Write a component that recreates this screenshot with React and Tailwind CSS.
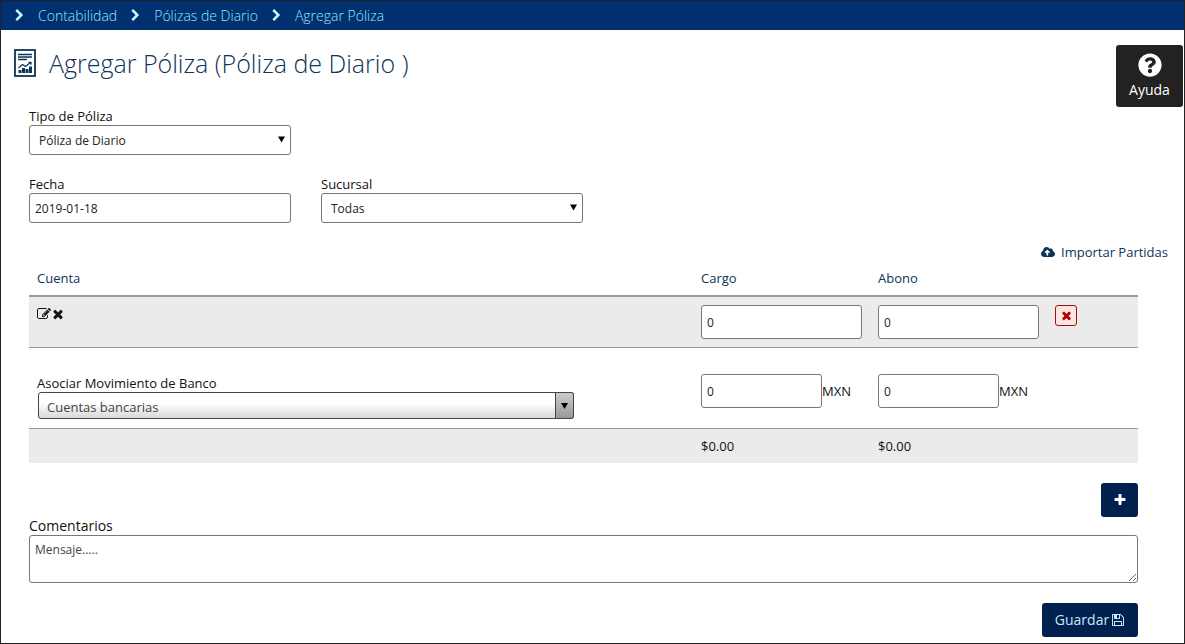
import { useState } from "react";
import { FaCloudUploadAlt, FaQuestionCircle } from "react-icons/fa";

const ICON_PATHS = {
  chevron:
    "M1363 877l-742 742q-19 19-45 19t-45-19l-166-166q-19-19-19-45t19-45l531-531-531-531q-19-19-19-45t19-45l166-166q19-19 45-19t45 19l742 742q19 19 19 45t-19 45z",
  times:
    "M1490 1322q0 40-28 68l-136 136q-28 28-68 28t-68-28l-294-294-294 294q-28 28-68 28t-68-28l-136-136q-28-28-28-68t28-68l294-294-294-294q-28-28-28-68t28-68l136-136q28-28 68-28t68 28l294 294 294-294q28-28 68-28t68 28l136 136q28 28 28 68t-28 68l-294 294 294 294q28 28 28 68z",
  plus:
    "M1600 736v192q0 40-28 68t-68 28h-416v416q0 40-28 68t-68 28h-192q-40 0-68-28t-28-68v-416h-416q-40 0-68-28t-28-68v-192q0-40 28-68t68-28h416v-416q0-40 28-68t68-28h192q40 0 68 28t28 68v416h416q40 0 68 28t28 68z",
  edit:
    "M888 1184l116-116-152-152-116 116v56h96v96h56zm440-720q-16-16-33 1l-350 350q-17 17-1 33t33-1l350-350q17-17 1-33zm80 594v190q0 119-84.5 203.5t-203.5 84.5h-832q-119 0-203.5-84.5t-84.5-203.5v-832q0-119 84.5-203.5t203.5-84.5h832q63 0 117 25 15 7 18 23 3 17-9 29l-49 49q-14 14-32 8-23-6-45-6h-832q-66 0-113 47t-47 113v832q0 66 47 113t113 47h832q66 0 113-47t47-113v-126q0-13 9-22l64-64q15-15 35-7t20 29zm-96-738l288 288-672 672h-288v-288zm444 132l-92 92-288-288 92-92q28-28 68-28t68 28l152 152q28 28 28 68t-28 68z",
  save:
    "M512 1536h768v-384h-768v384zm896 0h128v-896q0-14-10-38.5t-20-34.5l-281-281q-10-10-34-20t-39-10v416q0 40-28 68t-68 28h-576q-40 0-68-28t-28-68v-416h-128v1280h128v-416q0-40 28-68t68-28h832q40 0 68 28t28 68v416zm-384-928v-320q0-13-9.5-22.5t-22.5-9.5h-192q-13 0-22.5 9.5t-9.5 22.5v320q0 13 9.5 22.5t22.5 9.5h192q13 0 22.5-9.5t9.5-22.5zm640 32v928q0 40-28 68t-68 28h-1344q-40 0-68-28t-28-68v-1344q0-40 28-68t68-28h928q40 0 88 20t76 48l280 280q28 28 48 76t20 88z",
};

const Icon = ({ name, className }) => (
  <svg viewBox="0 0 1792 1792" fill="currentColor" className={className} aria-hidden="true">
    <path d={ICON_PATHS[name]} />
  </svg>
);

const ReportIcon = () => (
  <svg viewBox="0 0 22 28" className="h-7 w-[22px] shrink-0 text-[#0d3557]" aria-hidden="true">
    <rect x="1" y="1" width="20" height="26" fill="none" stroke="currentColor" strokeWidth="1.8" />
    <path d="M4 5.500h14M4 8h14M4 10.500h9" stroke="currentColor" strokeWidth="1.4" />
    <path
      d="M4.500 19l4-3.500 3 2 5-4M14.500 13.300h2.500v2.500"
      fill="none"
      stroke="currentColor"
      strokeWidth="1.2"
    />
    <path
      d="M4.500 21h3v3h-3zM8 19h3v5H8zM11.500 20h3v4h-3zM15 17.500h3V24h-3z"
      fill="currentColor"
    />
  </svg>
);

const crumbs = ["Contabilidad", "Pólizas de Diario", "Agregar Póliza"];

const inputClass =
  "block rounded-[3px] border border-[#777] bg-white px-[5px] text-[12px] text-[#222] outline-none";

const SelectField = ({ id, label, options }) => (
  <div className="w-[262px]">
    <label htmlFor={id} className="block">
      {label}
    </label>
    <div className="relative">
      <select
        id={id}
        className="block h-[30px] w-full appearance-none rounded-[3px] border border-[#777] bg-white px-[9px] pt-[2px] text-[12px] text-[#222] outline-none"
      >
        {options.map((option) => (
          <option key={option}>{option}</option>
        ))}
      </select>
      <svg
        viewBox="0 0 8 7"
        className="pointer-events-none absolute top-[11px] right-[6px] h-[7px] w-[7px]"
        aria-hidden="true"
      >
        <path d="M0 0h8L4 7z" />
      </svg>
    </div>
  </div>
);

const App = () => {
  const [fecha, setFecha] = useState("2019-01-18");
  const [partida, setPartida] = useState({ cargo: "0", abono: "0" });
  const [banco, setBanco] = useState({ cargo: "0", abono: "0" });

  return (
    <div className="relative min-h-screen border border-[#222] bg-white font-['Open_Sans',sans-serif] text-[13px] leading-[18px] text-[#111]">
      {/* Breadcrumb */}
      <nav className="flex h-[29px] items-center bg-[#003070] pl-3 text-[14px] font-light text-[#8fe9fa]">
        {crumbs.map((crumb) => (
          <div key={crumb} className="mr-3 flex items-center">
            <Icon name="chevron" className="mr-3 h-[13px] w-[13px] text-[#b5fcff]" />
            <a href="#">{crumb}</a>
          </div>
        ))}
      </nav>

      <a
        href="#"
        className="absolute top-11 right-px flex h-[62px] w-[67px] flex-col items-center rounded-[3px] bg-[#222] pt-2 text-[14px] text-white"
      >
        <FaQuestionCircle className="mb-1 h-6 w-6" />
        Ayuda
      </a>

      <header className="mb-[26px] flex items-center gap-[13px] pt-[15px] pl-[13px]">
        <ReportIcon />
        <h1 className="text-[25px] leading-9 font-light text-[#0d3557]">
          Agregar Póliza (Póliza de Diario )
        </h1>
      </header>

      <form className="pr-[46px] pb-[6px] pl-7" onSubmit={(e) => e.preventDefault()}>
        <SelectField id="tipo" label="Tipo de Póliza" options={["Póliza de Diario"]} />

        <div className="mt-5 flex gap-[30px]">
          <div className="w-[262px]">
            <label htmlFor="fecha" className="block">
              Fecha
            </label>
            <input
              id="fecha"
              value={fecha}
              onChange={(e) => setFecha(e.target.value)}
              className={`${inputClass} h-[30px] w-full`}
            />
          </div>
          <SelectField id="sucursal" label="Sucursal" options={["Todas"]} />
        </div>

        <div className="-mr-[30px] mt-5 flex justify-end">
          <a href="#" className="flex items-center gap-[6px] text-[#0d3557]">
            <FaCloudUploadAlt className="h-[14px] w-[14px]" />
            Importar Partidas
          </a>
        </div>

        <table className="w-full table-fixed border-collapse text-left">
          <colgroup>
            <col />
            <col className="w-[177px]" />
            <col className="w-[177px]" />
            <col className="w-[91px]" />
          </colgroup>
          <thead>
            <tr className="h-[35px] border-b-2 border-[#999] text-[#0d3557]">
              <th className="px-2 font-medium">Cuenta</th>
              <th className="px-2 font-medium">Cargo</th>
              <th className="px-2 font-medium">Abono</th>
              <th></th>
            </tr>
          </thead>
          <tbody>
            <tr className="border-b border-[#999] bg-[#ebebeb] align-top">
              <td className="px-2 pt-[10px]">
                <div className="flex items-center">
                  <button type="button" aria-label="Editar cuenta">
                    <Icon name="edit" className="h-[14px] w-[14px]" />
                  </button>
                  <button type="button" aria-label="Quitar cuenta">
                    <Icon name="times" className="h-[14px] w-[14px]" />
                  </button>
                </div>
              </td>
              <td className="p-2">
                <input
                  aria-label="Cargo"
                  value={partida.cargo}
                  onChange={(e) => setPartida({ ...partida, cargo: e.target.value })}
                  className={`${inputClass} h-[34px] w-full`}
                />
              </td>
              <td className="p-2">
                <input
                  aria-label="Abono"
                  value={partida.abono}
                  onChange={(e) => setPartida({ ...partida, abono: e.target.value })}
                  className={`${inputClass} h-[34px] w-full`}
                />
              </td>
              <td className="p-2">
                <button
                  type="button"
                  aria-label="Eliminar partida"
                  className="flex h-[21px] w-[22px] items-center justify-center rounded-[3px] border border-[#a01010] bg-[#fbe4e2] text-[#b00000]"
                >
                  <Icon name="times" className="h-[13px] w-[13px]" />
                </button>
              </td>
            </tr>
            <tr className="border-b border-[#999] align-top">
              <td className="px-2 pt-[26px] pb-[9px]">
                <label htmlFor="banco" className="block">
                  Asociar Movimiento de Banco
                </label>
                <div className="relative ml-px w-[536px] max-w-full">
                  <select
                    id="banco"
                    className="block h-[27px] w-full appearance-none rounded-[3px] border border-[#444] bg-linear-to-b from-white from-40% to-[#d8d8d8] px-2 pt-[2px] text-[13px] text-[#444] outline-none"
                  >
                    <option>Cuentas bancarias</option>
                  </select>
                  <span className="pointer-events-none absolute inset-y-0 right-0 flex w-[19px] items-center justify-center rounded-r-[3px] border border-[#444] bg-linear-to-b from-[#ccc] to-[#999]">
                    <svg viewBox="0 0 7 6" className="h-[6px] w-[7px]" aria-hidden="true">
                      <path d="M0 0h7L3.500 6z" />
                    </svg>
                  </span>
                </div>
              </td>
              <td className="pt-[26px] pl-2">
                <div className="flex items-center">
                  <input
                    id="banco-cargo"
                    aria-label="Cargo del banco"
                    value={banco.cargo}
                    onChange={(e) => setBanco({ ...banco, cargo: e.target.value })}
                    className={`${inputClass} h-[34px] w-[121px]`}
                  />
                  <label htmlFor="banco-cargo">MXN</label>
                </div>
              </td>
              <td className="pt-[26px] pl-2">
                <div className="flex items-center">
                  <input
                    id="banco-abono"
                    aria-label="Abono del banco"
                    value={banco.abono}
                    onChange={(e) => setBanco({ ...banco, abono: e.target.value })}
                    className={`${inputClass} h-[34px] w-[121px]`}
                  />
                  <label htmlFor="banco-abono">MXN</label>
                </div>
              </td>
              <td></td>
            </tr>
          </tbody>
          <tfoot>
            <tr className="h-[34px] bg-[#ebebeb]">
              <td></td>
              <td className="px-2">$0.00</td>
              <td className="px-2">$0.00</td>
              <td></td>
            </tr>
          </tfoot>
        </table>

        <div className="mt-5 flex justify-end">
          <button
            type="button"
            aria-label="Agregar partida"
            className="flex h-[34px] w-[37px] items-center justify-center rounded-[3px] bg-[#00204d] text-white"
          >
            <Icon name="plus" className="h-[14px] w-[14px]" />
          </button>
        </div>

        <label htmlFor="comentarios" className="block text-[14px] font-medium">
          Comentarios
        </label>
        <textarea
          id="comentarios"
          placeholder="Mensaje....."
          className={`${inputClass} h-12 w-full py-[5px] placeholder:text-[#444]`}
        />

        <div className="mt-5 flex justify-end">
          <button
            type="submit"
            className="flex h-[34px] w-24 items-center justify-center gap-[2px] rounded-[3px] bg-[#00204d] text-[14px] text-[#c5eaff]"
          >
            Guardar
            <Icon name="save" className="h-[14px] w-[14px]" />
          </button>
        </div>
      </form>
    </div>
  );
};

export default App;
